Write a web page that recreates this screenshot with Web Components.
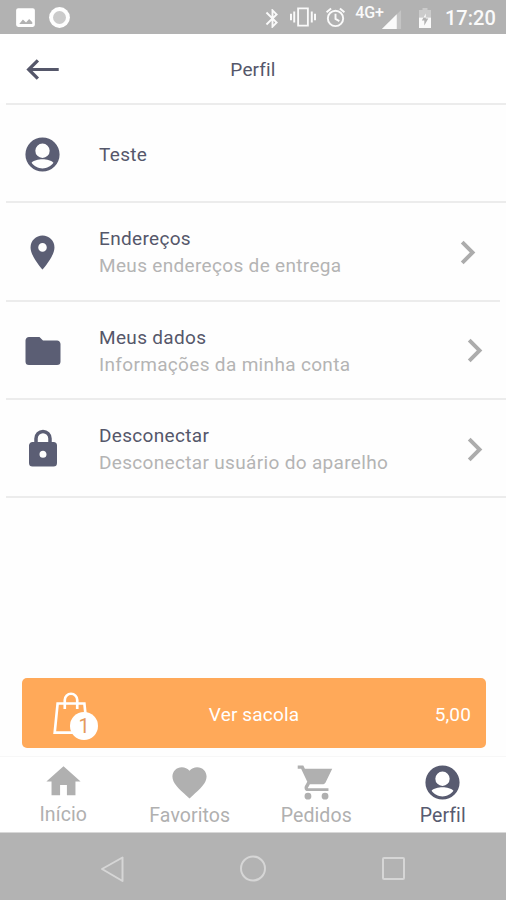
<!DOCTYPE html>
<html lang="pt-BR">
<head>
<meta charset="UTF-8">
<meta name="viewport" content="width=device-width, initial-scale=1.0">
<title>Perfil</title>
<style>
  html, body {
    margin: 0;
    height: 100%;
    overflow: hidden;
  }

  body {
    background: #fefefe;
    font-family: Roboto, "Liberation Sans", sans-serif;
    color: #55576a;
  }
</style>
</head>
<body>
<profile-page></profile-page>

<script>
/**
 * AppIcon - inline SVG icons, 24x24 grid
 */
const ICONS = {
  account: '<path fill-rule="evenodd" d="M12 2a10 10 0 1 0 0 20a10 10 0 0 0 0-20zM12 5.600a4.200 4.200 0 1 1 0 8.400a4.200 4.200 0 0 1 0-8.400zM12 20.200c-2.600 0-5-1.300-6.400-3.300c.8-1.400 4-2.100 6.400-2.100s5.600.7 6.400 2.100c-1.400 2-3.800 3.300-6.400 3.300z"/>',
  pin: '<path d="M12 11.500A2.500 2.500 0 0 1 9.500 9A2.500 2.500 0 0 1 12 6.500A2.500 2.500 0 0 1 14.500 9A2.500 2.500 0 0 1 12 11.500M12 2A7 7 0 0 0 5 9C5 14.250 12 22 12 22S19 14.250 19 9A7 7 0 0 0 12 2Z"/>',
  folder: '<path d="M10 4H4C2.890 4 2 4.890 2 6V18A2 2 0 0 0 4 20H20A2 2 0 0 0 22 18V8C22 6.890 21.100 6 20 6H12L10 4Z"/>',
  lock: '<path d="M12 17A2 2 0 0 0 14 15C14 13.890 13.100 13 12 13A2 2 0 0 0 10 15A2 2 0 0 0 12 17M18 8A2 2 0 0 1 20 10V20A2 2 0 0 1 18 22H6A2 2 0 0 1 4 20V10C4 8.890 4.900 8 6 8H7V6A5 5 0 0 1 12 1A5 5 0 0 1 17 6V8H18M12 3A3 3 0 0 0 9 6V8H15V6A3 3 0 0 0 12 3Z"/>',
  chevron: '<path d="M8.590 16.580L13.170 12L8.590 7.410L10 6L16 12L10 18Z"/>',
  home: '<path d="M10 20V14H14V20H19V12H22L12 3L2 12H5V20H10Z"/>',
  heart: '<path d="M12 21.350L10.550 20.030C5.400 15.360 2 12.270 2 8.500C2 5.410 4.420 3 7.500 3C9.240 3 10.910 3.810 12 5.080C13.090 3.810 14.760 3 16.500 3C19.580 3 22 5.410 22 8.500C22 12.270 18.600 15.360 13.450 20.030L12 21.350Z"/>',
  cart: '<path d="M17 18a2 2 0 1 0 0 4a2 2 0 0 0 0-4M1 2V4H3L6.600 11.590L5.240 14.040C5.090 14.320 5 14.650 5 15A2 2 0 0 0 7 17H19V15.400H7.420A.25.25 0 0 1 7.170 14.750L8.100 13H15.550C16.300 13 16.960 12.580 17.300 11.970L21.200 4H5.210L4.270 2M7 18a2 2 0 1 0 0 4a2 2 0 0 0 0-4"/>',
  back: '<path fill="none" stroke="currentColor" stroke-width="1.900" d="M21.500 12H4M9.300 6.600L3.900 12L9.300 17.400"/>',
  bluetooth: '<path d="M14.880 16.290L13 18.170V14.410M13 5.830L14.880 7.710L13 9.580M17.710 7.710L12 2H11V9.580L6.410 5L5 6.410L10.590 12L5 17.580L6.410 19L11 14.410V22H12L17.710 16.290L13.410 12L17.710 7.710Z"/>',
  vibrate: '<path d="M0 15h1.800V9H0v6zM3 17h1.800V7H3v10zM22.200 9v6H24V9h-1.800zM19.200 17H21V7h-1.800v10z"/><path fill="none" stroke="currentColor" stroke-width="1.700" d="M7.500 4h9v16h-9z"/>',
  alarm: '<g fill="none" stroke="currentColor" stroke-width="2"><circle cx="12" cy="13" r="8"/><path d="M12 8v5.500l4 2.300M2.700 6.500l4.700-4M21.300 6.500l-4.700-4"/></g>',
  signal: '<path fill-opacity=".25" d="M2 22h20V2z"/><path d="M2 22h15.500V6.500z"/>',
  battery: '<path fill-opacity=".35" d="M9.500 4V2h5v2H18v7.500H6V4z"/><path fill-rule="evenodd" d="M6 11.500h12V22H6zM12.800 7.500l-4 7h2.500v5l4-7h-2.500z"/>',
  picture: '<path fill-rule="evenodd" d="M5 3h14a2 2 0 0 1 2 2v14a2 2 0 0 1-2 2H5a2 2 0 0 1-2-2V5a2 2 0 0 1 2-2zM6 18.300h12.500V16.500L15.500 13.500L12.500 16.700L9.500 14z"/>',
  record: '<circle cx="12" cy="12" r="10"/><circle cx="12" cy="12" r="6.200" fill="#cbcbcb"/>',
  bag: '<g fill="none" stroke="currentColor" stroke-width="1.450"><path d="M4.700 6.800h14.600l1.600 15.900H3.100z"/><path d="M8.600 9.800V4.900a3.400 3.400 0 0 1 6.800 0V9.800"/></g>'
};

class AppIcon extends HTMLElement {
  constructor() {
    super();
    this.attachShadow({ mode: 'open' });
  }

  connectedCallback() {
    const size = this.getAttribute('size') || '24';
    this.shadowRoot.innerHTML = `
      <style>
        :host { display: block; flex: none; width: ${size}px; height: ${size}px; }
        svg { display: block; }
      </style>
      <svg width="${size}" height="${size}" viewBox="0 0 24 24" fill="currentColor" aria-hidden="true">
        ${ICONS[this.getAttribute('name')] || ''}
      </svg>
    `;
  }
}

/**
 * StatusBar - Android status bar
 */
class StatusBar extends HTMLElement {
  constructor() {
    super();
    this.attachShadow({ mode: 'open' });
    this.shadowRoot.innerHTML = `
      <style>
        :host {
          display: flex;
          align-items: center;
          box-sizing: border-box;
          height: 34px;
          padding: 0 10px 0 13px;
          background: #b2b2b2;
          color: #fff;
        }
        .left { display: flex; gap: 9px; align-items: center; flex: 1; }
        .right { display: flex; align-items: center; color: #fafafa; }
        .net { font-size: 16px; font-weight: 500; line-height: 16px; margin: 0 -4px 8px 8px; }
        .time { width: 51px; font-size: 20px; font-weight: 500; line-height: 34px; padding-top: 2px; margin-left: 8px; }
        .bluetooth { margin-top: 2px; }
        .vibrate { margin-left: 6px; }
        .alarm { margin-left: 8px; }
        .signal { margin-top: 4px; }
        .battery { margin: 2px 0 0 10px; }
      </style>
      <div class="left">
        <app-icon name="picture" size="25"></app-icon>
        <app-icon name="record" size="25"></app-icon>
      </div>
      <div class="right">
        <app-icon class="bluetooth" name="bluetooth" size="23"></app-icon>
        <app-icon class="vibrate" name="vibrate" size="26"></app-icon>
        <app-icon class="alarm" name="alarm" size="23"></app-icon>
        <span class="net">4G+</span>
        <app-icon class="signal" name="signal" size="23"></app-icon>
        <app-icon class="battery" name="battery" size="24"></app-icon>
        <span class="time">17:20</span>
      </div>
    `;
  }
}

/**
 * AppHeader - back arrow and centered title
 */
class AppHeader extends HTMLElement {
  constructor() {
    super();
    this.attachShadow({ mode: 'open' });
    this.shadowRoot.innerHTML = `
      <style>
        :host {
          display: grid;
          grid-template-columns: 64px 1fr 64px;
          align-items: center;
          box-sizing: border-box;
          height: 69px;
          padding-top: 2px;
          background: #fff;
          font-size: 19px;
          letter-spacing: .15px;
          text-align: center;
        }
        app-icon { margin-left: 22px; }
      </style>
      <app-icon name="back" size="41"></app-icon>
      <span><slot></slot></span>
    `;
  }
}

/**
 * MenuItem - list row with icon, title and optional subtitle
 */
class MenuItem extends HTMLElement {
  constructor() {
    super();
    this.attachShadow({ mode: 'open' });
  }

  connectedCallback() {
    const subtitle = this.getAttribute('subtitle');
    const size = this.getAttribute('icon-size') || '41';

    this.shadowRoot.innerHTML = `
      <style>
        :host {
          display: flex;
          align-items: center;
          box-sizing: border-box;
          height: 98.300px;
          margin-left: 6px;
          padding: 2px 8px 0 0;
          border-top: 2px solid #ececec;
        }
        :host([inset]) { padding-right: 15px; }
        :host([short]) { margin-right: 6px; padding-right: 2px; }
        .icon { display: flex; justify-content: center; width: 73px; color: #5b5e74; }
        .text { flex: 1; margin-left: 20px; font-size: 19px; line-height: 27px; letter-spacing: .33px; white-space: nowrap; }
        .sub { color: #b4b4b4; }
        .chevron { color: #acacac; }
      </style>
      <div class="icon"><app-icon name="${this.getAttribute('icon')}" size="${size}"></app-icon></div>
      <div class="text">
        <div><slot></slot></div>
        ${subtitle ? `<div class="sub">${subtitle}</div>` : ''}
      </div>
      ${subtitle ? '<app-icon class="chevron" name="chevron" size="47"></app-icon>' : ''}
    `;
  }
}

/**
 * BagButton - shows the bag with item count and total
 */
class BagButton extends HTMLElement {
  constructor() {
    super();
    this.attachShadow({ mode: 'open' });
  }

  connectedCallback() {
    this.shadowRoot.innerHTML = `
      <style>
        :host {
          display: grid;
          grid-template-columns: 1fr auto 1fr;
          align-items: center;
          box-sizing: border-box;
          height: 70px;
          margin: 0 20px 8px 22px;
          padding: 2px 15px 0 27px;
          border-radius: 5px;
          background: #ffa959;
          color: #fff;
          font-size: 19px;
          letter-spacing: .15px;
        }
        .bag { position: relative; width: 46px; height: 46px; }
        .count {
          position: absolute;
          left: 21px;
          top: 21px;
          width: 28px;
          height: 28px;
          border-radius: 50%;
          background: #fff;
          color: #e59a5c;
          font-size: 20px;
          line-height: 28px;
          letter-spacing: 0;
          text-align: center;
        }
        .label { margin-right: 12px; }
        .total { text-align: right; }
      </style>
      <div class="bag">
        <app-icon name="bag" size="44"></app-icon>
        <span class="count">${this.getAttribute('count')}</span>
      </div>
      <span class="label"><slot></slot></span>
      <span class="total">${this.getAttribute('total')}</span>
    `;
  }
}

/**
 * TabItem - one entry of the bottom tab bar
 */
class TabItem extends HTMLElement {
  constructor() {
    super();
    this.attachShadow({ mode: 'open' });
  }

  connectedCallback() {
    this.shadowRoot.innerHTML = `
      <style>
        :host {
          display: flex;
          flex-direction: column;
          align-items: center;
          flex: 1;
          color: #b0b0b0;
          font-size: 19.500px;
          line-height: 25px;
          letter-spacing: .1px;
        }
        :host([active]) { color: #585b70; }
      </style>
      <app-icon name="${this.getAttribute('icon')}" size="41"></app-icon>
      <span><slot></slot></span>
    `;
  }
}

/**
 * NavBar - Android back / home / recents
 */
class NavBar extends HTMLElement {
  constructor() {
    super();
    this.attachShadow({ mode: 'open' });
    this.shadowRoot.innerHTML = `
      <style>
        :host {
          display: flex;
          align-items: center;
          justify-content: center;
          gap: 112px;
          box-sizing: border-box;
          height: 67px;
          padding-top: 5px;
          background: #b3b3b3;
        }
        svg { display: block; fill: none; stroke: #d6d6d6; stroke-width: 2; stroke-linejoin: round; }
      </style>
      <svg width="28" height="28"><path d="M3 14L23.500 2.500V26z"/></svg>
      <svg width="28" height="28"><circle cx="14" cy="13.500" r="12"/></svg>
      <svg width="28" height="28"><rect x="4" y="3" width="21" height="21" rx="1"/></svg>
    `;
  }
}

class ProfilePage extends HTMLElement {
  constructor() {
    super();
    this.attachShadow({ mode: 'open' });
    this.shadowRoot.innerHTML = `
      <style>
        :host { display: flex; flex-direction: column; height: 900px; }
        .list { flex: 1; }
        .end { height: 2px; margin-left: 6px; background: #ececec; }
        .tabs {
          display: flex;
          box-sizing: border-box;
          height: 77px;
          padding-top: 5px;
          background: #fff;
          border-top: 1px solid #f7f7f7;
          border-bottom: 1px solid #d8d8d8;
        }
        .first { margin-top: -1px; }
      </style>
      <status-bar></status-bar>
      <app-header>Perfil</app-header>
      <div class="list">
        <menu-item icon="account">Teste</menu-item>
        <menu-item icon="pin" subtitle="Meus endereços de entrega" inset>Endereços</menu-item>
        <menu-item icon="folder" icon-size="42" subtitle="Informações da minha conta" short>Meus dados</menu-item>
        <menu-item icon="lock" icon-size="42" subtitle="Desconectar usuário do aparelho">Desconectar</menu-item>
        <div class="end"></div>
      </div>
      <bag-button count="1" total="5,00">Ver sacola</bag-button>
      <div class="tabs">
        <tab-item class="first" icon="home">Início</tab-item>
        <tab-item icon="heart">Favoritos</tab-item>
        <tab-item icon="cart">Pedidos</tab-item>
        <tab-item icon="account" active>Perfil</tab-item>
      </div>
      <nav-bar></nav-bar>
    `;
  }
}

customElements.define('app-icon', AppIcon);
customElements.define('status-bar', StatusBar);
customElements.define('app-header', AppHeader);
customElements.define('menu-item', MenuItem);
customElements.define('bag-button', BagButton);
customElements.define('tab-item', TabItem);
customElements.define('nav-bar', NavBar);
customElements.define('profile-page', ProfilePage);
</script>
</body>
</html>
